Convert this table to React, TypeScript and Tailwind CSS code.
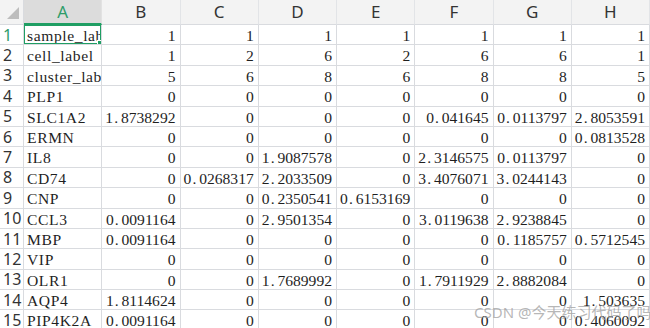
import React from "react";

const cols = ["A", "B", "C", "D", "E", "F", "G", "H"];

const rows: string[][] = [
  ["sample_label", "1", "1", "1", "1", "1", "1", "1"],
  ["cell_label", "1", "2", "6", "2", "6", "6", "1"],
  ["cluster_label", "5", "6", "8", "6", "8", "8", "5"],
  ["PLP1", "0", "0", "0", "0", "0", "0", "0"],
  ["SLC1A2", "1.8738292", "0", "0", "0", "0.041645", "0.0113797", "2.8053591"],
  ["ERMN", "0", "0", "0", "0", "0", "0", "0.0813528"],
  ["IL8", "0", "0", "1.9087578", "0", "2.3146575", "0.0113797", "0"],
  ["CD74", "0", "0.0268317", "2.2033509", "0", "3.4076071", "3.0244143", "0"],
  ["CNP", "0", "0", "0.2350541", "0.6153169", "0", "0", "0"],
  ["CCL3", "0.0091164", "0", "2.9501354", "0", "3.0119638", "2.9238845", "0"],
  ["MBP", "0.0091164", "0", "0", "0", "0", "0.1185757", "0.5712545"],
  ["VIP", "0", "0", "0", "0", "0", "0", "0"],
  ["OLR1", "0", "0", "1.7689992", "0", "1.7911929", "2.8882084", "0"],
  ["AQP4", "1.8114624", "0", "0", "0", "0", "0", "1.503635"],
  ["PIP4K2A", "0.0091164", "0", "0", "0", "0", "0", "0.4060092"],
];

const serif = { fontFamily: '"Liberation Serif", "DejaVu Serif", serif' };

function Num({ v }: { v: string }) {
  const i = v.indexOf(".");
  if (i < 0) return <span>{v}</span>;
  return (
    <span>
      {v.slice(0, i)}
      <span className="inline-block w-[7.8px] pl-[1px]">.</span>
      {v.slice(i + 1)}
    </span>
  );
}

export default function App() {
  return (
    <div className="relative w-[650px] h-[328px] overflow-hidden bg-white">
      <div className="grid grid-cols-[24px_repeat(8,78.25px)] grid-rows-[25px] auto-rows-[20.4px]">
        <div className="relative bg-[#f3f3f3] border-r border-b border-[#d9dbdf]">
          <div className="absolute right-[4px] bottom-[5px] w-0 h-0 border-l-[12px] border-l-transparent border-b-[12px] border-b-[#bdbdbd]" />
        </div>
        {cols.map((c, i) => (
          <div
            key={c}
            className={
              i === 0
                ? "flex items-center justify-center bg-[#dcdcdc] border-r border-[#e2e2e2] border-b-2 border-b-[#1f9e63] text-[#2e9c6a] text-[17px] font-['Noto_Sans',sans-serif]"
                : "flex items-center justify-center bg-[#f3f3f3] border-r border-b border-[#e2e4e7] border-b-[#d9dbdf] text-[#333] text-[17px] font-['Noto_Sans',sans-serif]"
            }
          >
            {c}
          </div>
        ))}
        {rows.map((r, ri) => (
          <React.Fragment key={ri}>
            <div
              className={
                "flex items-center pl-[3px] border-r border-b border-[#d9dbdf] bg-white text-[16px] font-['Noto_Sans',sans-serif] " +
                (ri === 0 ? "text-[#2e9c6a]" : "text-[#333]")
              }
            >
              {ri + 1}
            </div>
            {r.map((v, ci) => {
              const isLabel = ci === 0;
              const active = ri === 0 && ci === 0;
              return (
                <div
                  key={ci}
                  className={
                    "relative flex items-center overflow-hidden whitespace-nowrap border-r border-b border-[#d9dbdf] text-[15.6px] text-[#1f1f1f] " +
                    (isLabel ? "justify-start pl-[3px] tracking-[0.6px]" : "justify-end pr-[4px]")
                  }
                  style={serif}
                >
                  <span className="pt-[2px]">{isLabel ? v : <Num v={v} />}</span>
                  {active && (
                    <>
                      <div className="absolute -left-[1px] -top-[1px] right-[-1px] bottom-[-1px] border-2 border-[#1f9e63]" />
                      <div className="absolute right-[-1px] bottom-[-1px] w-[5px] h-[5px] bg-[#1f9e63] border border-white" />
                    </>
                  )}
                </div>
              );
            })}
          </React.Fragment>
        ))}
      </div>
      <div
        className="absolute left-[474px] top-[301px] text-[15px] text-[#a0a0a0]/75 whitespace-nowrap"
        style={{ fontFamily: '"Noto Sans", "Noto Sans CJK SC", sans-serif' }}
      >
        CSDN @今天练习代码了吗
      </div>
    </div>
  );
}
